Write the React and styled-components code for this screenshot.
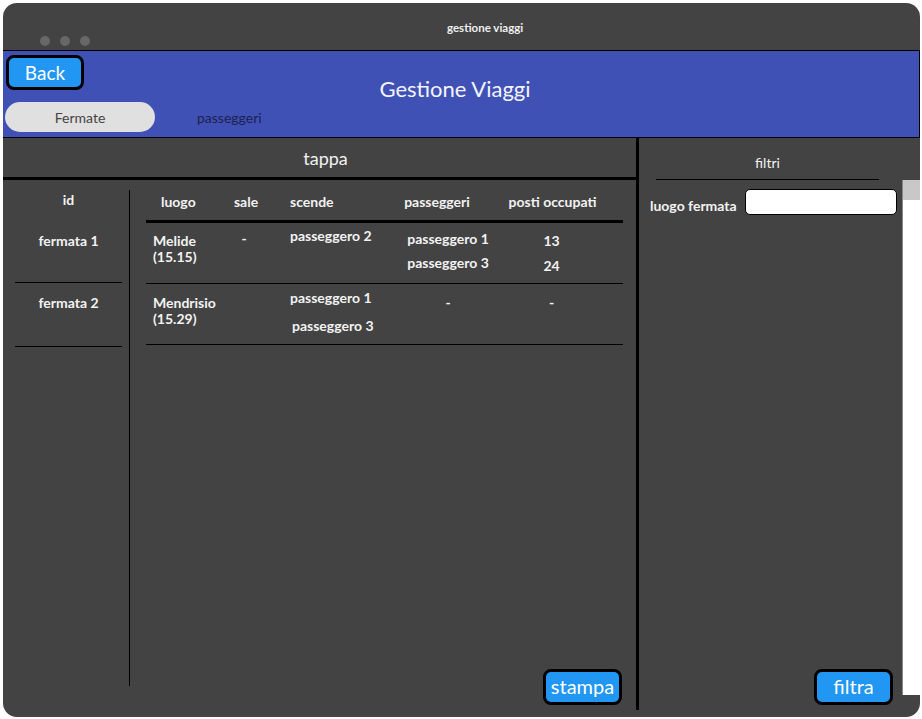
import styled, { createGlobalStyle } from "styled-components";

const GlobalStyle = createGlobalStyle`
  body {
    margin: 0;
    background: #ffffff;
    font-family: Lato, "Noto Sans", sans-serif;
  }
`;

const rows = [
  {
    id: "fermata 1",
    luogo: ["Melide", "(15.15)"],
    sale: ["-"],
    scende: ["passeggero 2"],
    passeggeri: ["passeggero 1", "passeggero 3"],
    posti: ["13", "24"],
    pad: { luogo: 10, sale: 8, scende: 5, passeggeri: 8, posti: 10 },
    gap: { passeggeri: 8, posti: 9 },
  },
  {
    id: "fermata 2",
    luogo: ["Mendrisio", "(15.29)"],
    sale: [],
    scende: ["passeggero 1", "passeggero 3"],
    passeggeri: ["-"],
    posti: ["-"],
    pad: { luogo: 11, sale: 11, scende: 6, passeggeri: 11, posti: 11 },
    gap: { scende: 12 },
  },
];

const App = () => {
  return (
    <>
      <GlobalStyle />
      <Window>
        <TitleBar>
          <Dots>
            <Dot />
            <Dot />
            <Dot />
          </Dots>
          <WindowTitle>gestione viaggi</WindowTitle>
        </TitleBar>

        <Header>
          <BackButton>Back</BackButton>
          <PageTitle>Gestione Viaggi</PageTitle>
          <Tabs>
            <Tab active>Fermate</Tab>
            <Tab>passeggeri</Tab>
          </Tabs>
        </Header>

        <Main>
          <LeftPanel>
            <PanelTitle>tappa</PanelTitle>
            <TableArea>
              <IdColumn>
                <IdHead>id</IdHead>
                {rows.map((r) => (
                  <IdCell key={r.id}>{r.id}</IdCell>
                ))}
              </IdColumn>
              <VLine />
              <DataColumn>
                <DataHead>
                  <HeadCell pad={15}>luogo</HeadCell>
                  <HeadCell center>sale</HeadCell>
                  <HeadCell pad={24}>scende</HeadCell>
                  <HeadCell center shift={22}>passeggeri</HeadCell>
                  <HeadCell center shift={24}>posti occupati</HeadCell>
                </DataHead>
                {rows.map((r) => (
                  <DataRow key={r.id}>
                    <Cell pad={7} top={r.pad.luogo} gap={0}>
                      {r.luogo.map((t) => <span key={t}>{t}</span>)}
                    </Cell>
                    <Cell center top={r.pad.sale} shift={4}>
                      {r.sale.map((t) => <span key={t}>{t}</span>)}
                    </Cell>
                    <Cell pad={24} top={r.pad.scende} gap={r.gap.scende || 0}>
                      {r.scende.map((t, i) => <span key={t} style={{ paddingLeft: i * 2 }}>{t}</span>)}
                    </Cell>
                    <Cell center top={r.pad.passeggeri} gap={r.gap.passeggeri || 0}>
                      {r.passeggeri.map((t) => <span key={t}>{t}</span>)}
                    </Cell>
                    <Cell center top={r.pad.posti} gap={r.gap.posti || 0} shift={26}>
                      {r.posti.map((t) => <span key={t}>{t}</span>)}
                    </Cell>
                  </DataRow>
                ))}
                <ButtonRow inset={1}>
                  <ActionButton>stampa</ActionButton>
                </ButtonRow>
              </DataColumn>
            </TableArea>
          </LeftPanel>

          <PanelDivider />

          <RightPanel>
            <FilterTitle>
              <span>filtri</span>
            </FilterTitle>
            <FilterBody>
              <FilterRow>
                <FilterLabel>luogo fermata</FilterLabel>
                <FilterInput size={1} />
              </FilterRow>
              <ButtonRow inset={4}>
                <ActionButton>filtra</ActionButton>
              </ButtonRow>
            </FilterBody>
            <Scrollbar>
              <Thumb />
            </Scrollbar>
          </RightPanel>
        </Main>
      </Window>
    </>
  );
};

const Window = styled.div`
  margin: 3px 0 0 3px;
  width: 917px;
  height: 714px;
  background: #434343;
  border-radius: 14px;
  overflow: hidden;
  display: flex;
  flex-direction: column;
  color: #f2f2f2;
`;

const TitleBar = styled.div`
  height: 47px;
  flex-shrink: 0;
  display: flex;
  align-items: flex-start;
`;

const Dots = styled.div`
  display: flex;
  gap: 10px;
  margin: 33px 0 0 37px;
`;

const Dot = styled.div`
  width: 10px;
  height: 10px;
  border-radius: 50%;
  background: #676767;
`;

const WindowTitle = styled.div`
  margin: 18px 0 0 357px;
  font-size: 11.5px;
  font-weight: 700;
  color: #eeeeee;
`;

const Header = styled.div`
  box-sizing: border-box;
  height: 88px;
  flex-shrink: 0;
  background: #3f51b5;
  border: 1px solid #000;
  border-left: none;
  display: grid;
  grid-template-rows: 39px 1fr;
  padding: 4px 0 0;
`;

const BackButton = styled.button`
  grid-area: 1 / 1;
  justify-self: start;
  align-self: start;
  margin-left: 3px;
  width: 78px;
  height: 35px;
  background: #2196f3;
  border: 3px solid #000;
  border-radius: 8px;
  color: #fff;
  font-family: inherit;
  font-size: 19px;
  padding: 0;
`;

const PageTitle = styled.h1`
  grid-area: 1 / 1 / 3 / 2;
  justify-self: center;
  align-self: start;
  margin: 21px 12px 0 0;
  font-size: 22px;
  line-height: 26px;
  font-weight: 400;
  color: #f4f4ff;
`;

const Tabs = styled.div`
  grid-area: 2 / 1;
  display: flex;
  align-items: center;
  align-self: start;
  gap: 42px;
  margin: 8px 0 0 2px;
`;

const Tab = styled.div`
  height: 30px;
  display: flex;
  align-items: center;
  justify-content: center;
  font-size: 14px;
  width: ${(p) => (p.active ? "150px" : "auto")};
  border-radius: 15px;
  background: ${(p) => (p.active ? "#e0e0e0" : "transparent")};
  color: ${(p) => (p.active ? "#444" : "#1c2150")};
`;

const Main = styled.div`
  flex: 1;
  display: flex;
  min-height: 0;
`;

const LeftPanel = styled.div`
  width: 633px;
  flex-shrink: 0;
  display: flex;
  flex-direction: column;
`;

const PanelTitle = styled.div`
  height: 39px;
  border-bottom: 3px solid #000;
  display: flex;
  align-items: center;
  justify-content: center;
  font-size: 18px;
  padding-left: 12px;
`;

const TableArea = styled.div`
  flex: 1;
  display: flex;
  padding-left: 12px;
`;

const IdColumn = styled.div`
  width: 107px;
  padding-top: 10px;
  display: flex;
  flex-direction: column;
  font-size: 14px;
  font-weight: 700;
`;

const IdHead = styled.div`
  height: 32px;
  text-align: center;
  padding-top: 1px;
  box-sizing: border-box;
`;

const IdCell = styled.div`
  height: 61px;
  padding-top: 10px;
  box-sizing: border-box;
  text-align: center;
  border-bottom: 1px solid #000;
  &:nth-of-type(3) {
    height: 64px;
    padding-top: 11px;
  }
`;

const VLine = styled.div`
  width: 1px;
  background: #000;
  margin: 10px 0 31px 7px;
`;

const DataColumn = styled.div`
  flex: 1;
  display: flex;
  flex-direction: column;
  padding: 0 13px 12px 16px;
`;

const grid = `
  display: grid;
  grid-template-columns: 80px 40px 124px 116px 1fr;
`;

const DataHead = styled.div`
  ${grid}
  height: 40px;
  border-bottom: 3px solid #000;
  font-size: 14px;
  font-weight: 700;
`;

const HeadCell = styled.div`
  padding-top: 13px;
  padding-left: ${(p) => p.pad || 0}px;
  padding-right: ${(p) => p.shift || 0}px;
  text-align: ${(p) => (p.center ? "center" : "left")};
  white-space: nowrap;
`;

const DataRow = styled.div`
  ${grid}
  height: 60px;
  border-bottom: 1px solid #000;
  font-size: 14px;
  font-weight: 700;
  &:last-of-type {
    height: 61px;
    width: 475px;
  }
`;

const Cell = styled.div`
  display: flex;
  flex-direction: column;
  align-items: ${(p) => (p.center ? "center" : "flex-start")};
  gap: ${(p) => p.gap || 0}px;
  padding-top: ${(p) => p.top || 0}px;
  padding-left: ${(p) => p.pad || 0}px;
  padding-right: ${(p) => p.shift || 0}px;
  line-height: 16px;
  white-space: nowrap;
`;

const ButtonRow = styled.div`
  margin-top: auto;
  display: flex;
  justify-content: flex-end;
  padding-right: ${(p) => p.inset || 0}px;
`;

const ActionButton = styled.button`
  width: 79px;
  height: 36px;
  background: #2196f3;
  border: 3px solid #000;
  border-radius: 8px;
  color: #fff;
  font-family: inherit;
  font-size: 20px;
  padding: 0 0 2px;
`;

const PanelDivider = styled.div`
  width: 3px;
  flex-shrink: 0;
  background: #000;
  margin-bottom: 7px;
`;

const RightPanel = styled.div`
  flex: 1;
  min-width: 0;
  display: grid;
  grid-template-columns: minmax(0, 1fr) 18px;
  grid-template-rows: 42px 1fr;
`;

const FilterTitle = styled.div`
  display: flex;
  align-items: flex-end;
  justify-content: center;
  span {
    display: block;
    width: 223px;
    text-align: center;
    font-size: 14px;
    padding-bottom: 8px;
    border-bottom: 1px solid #000;
    margin-right: 6px;
  }
`;

const FilterBody = styled.div`
  grid-area: 2 / 1;
  display: flex;
  flex-direction: column;
  padding: 9px 5px 12px 11px;
`;

const FilterRow = styled.div`
  display: flex;
  align-items: center;
  gap: 8px;
`;

const FilterLabel = styled.label`
  flex-shrink: 0;
  white-space: nowrap;
  font-size: 14px;
  font-weight: 700;
  padding-top: 6px;
`;

const FilterInput = styled.input`
  flex: 1;
  min-width: 0;
  height: 26px;
  box-sizing: border-box;
  border: 1px solid #000;
  border-radius: 5px;
  background: #fff;
`;

const Scrollbar = styled.div`
  grid-area: 2 / 2;
  background: #fff;
  border-left: 1px solid #888;
  margin-bottom: 22px;
`;

const Thumb = styled.div`
  height: 20px;
  background: #c8c8c8;
`;

export default App;
